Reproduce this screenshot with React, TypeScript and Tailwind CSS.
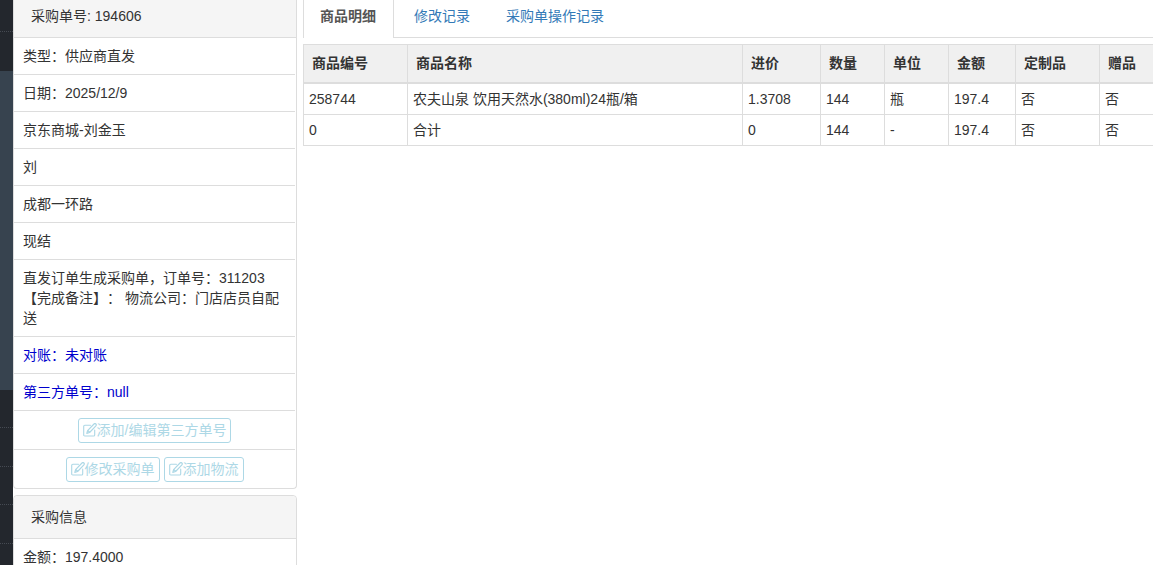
import type { ReactNode } from "react";

function EditIcon() {
  return (
    <svg viewBox="0 0 14 14" className="size-3.5 shrink-0" fill="none" stroke="currentColor" strokeLinejoin="round" strokeLinecap="round" aria-hidden="true">
      <path d="M7.5 2.2H1.8a1.1 1.1 0 0 0-1.1 1.1v8.6A1.1 1.1 0 0 0 1.8 13h8.8a1.1 1.1 0 0 0 1.1-1.1V7" strokeWidth="1.1" />
      <path d="M11 1c.6-.6 1.4-.5 1.9 0s.5 1.2 0 1.8L6.6 9.5 3.8 10.3 4.6 7.6z M4.9 7.6l1.7 1.6" strokeWidth="1.2" />
    </svg>
  );
}

function ActionButton({ children }: { children: ReactNode }) {
  return (
    <button type="button" className="flex h-[25px] items-center rounded-[3px] border border-[#add8e6] bg-white px-1 pb-0.5 text-[#add8e6]">
      <EditIcon />
      <span>{children}</span>
    </button>
  );
}

function Row({ children, blue = false }: { children: ReactNode; blue?: boolean }) {
  return (
    <li className={`mr-px border-b border-[#ddd] px-[9px] py-2 ${blue ? "text-[#0000cd]" : ""}`}>{children}</li>
  );
}

const menu = [
  "h-8 border-b border-dotted border-[#454a52] bg-[#23272d]",
  "h-[39px] bg-[#23272d]",
  "h-[319px] bg-[#37434f]",
  "h-[38px] border-b border-dotted border-[#454a52] bg-[#23272d]",
  "h-[39px] border-b border-dotted border-[#454a52] bg-[#23272d]",
  "h-[38px] border-b border-dotted border-[#454a52] bg-[#23272d]",
  "h-[39px] border-b border-dotted border-[#454a52] bg-[#23272d]",
];

const columns = [
  { title: "商品编号", width: "w-[104px]" },
  { title: "商品名称", width: "" },
  { title: "进价", width: "w-[78px]" },
  { title: "数量", width: "w-16" },
  { title: "单位", width: "w-16" },
  { title: "金额", width: "w-[67px]" },
  { title: "定制品", width: "w-[84px]" },
  { title: "赠品", width: "w-[53px]" },
];

const rows = [
  ["258744", "农夫山泉 饮用天然水(380ml)24瓶/箱", "1.3708", "144", "瓶", "197.4", "否", "否"],
  ["0", "合计", "0", "144", "-", "197.4", "否", "否"],
];

export default function App() {
  return (
    <div
      lang="zh-CN"
      className="flex h-screen overflow-hidden bg-white font-['Liberation_Sans','Noto_Sans_CJK_SC',sans-serif] text-sm leading-5 text-[#333] [text-spacing-trim:space-all]"
    >
      <nav className="w-[13px] shrink-0 bg-[#23272d]">
        {menu.map((style, i) => (
          <div key={i} className={style} />
        ))}
      </nav>

      <aside className="flex w-[284px] shrink-0 flex-col gap-1.5">
        <section className="shrink-0 rounded-b border border-t-0 border-[#ddd]">
          <h2 className="border-b border-[#ddd] bg-[#f5f5f5] px-[17px] pt-1.5 pb-[11px]">采购单号: 194606</h2>
          <ul>
            <Row>类型：供应商直发</Row>
            <Row>日期：2025/12/9</Row>
            <Row>京东商城-刘金玉</Row>
            <Row>刘</Row>
            <Row>成都一环路</Row>
            <Row>现结</Row>
            <Row>直发订单生成采购单，订单号：311203【完成备注】： 物流公司：门店店员自配送</Row>
            <Row blue>对账：未对账</Row>
            <Row blue>第三方单号：null</Row>
          </ul>
          <div className="mr-px flex justify-center border-b border-[#ddd] pt-[7px] pb-1.5">
            <ActionButton>添加/编辑第三方单号</ActionButton>
          </div>
          <div className="mr-px flex justify-center gap-1 pt-[7px] pb-1.5">
            <ActionButton>修改采购单</ActionButton>
            <ActionButton>添加物流</ActionButton>
          </div>
        </section>
        <section className="shrink-0 rounded border border-[#ddd]">
          <h2 className="rounded-t border-b border-[#ddd] bg-[#f5f5f5] px-[17px] py-[11px]">采购信息</h2>
          <ul>
            <Row>金额：197.4000</Row>
          </ul>
        </section>
      </aside>

      <main className="ml-1.5 min-w-0 flex-1">
        <div role="tablist" className="flex">
          <button type="button" role="tab" aria-selected="true" className="border-x border-[#ddd] pt-1.5 pr-[17px] pb-3 pl-4 font-bold text-[#555]">
            商品明细
          </button>
          <div className="flex flex-1 gap-1 border-b border-[#ddd] pl-1 text-[#337ab7]">
            <button type="button" role="tab" aria-selected="false" className="px-4 pt-1.5 pb-[11px]">修改记录</button>
            <button type="button" role="tab" aria-selected="false" className="px-4 pt-1.5 pb-[11px]">采购单操作记录</button>
          </div>
        </div>
        <table className="mt-1.5 w-full table-fixed border-separate border-spacing-0 border-t border-l border-[#ddd] text-left">
          <thead className="bg-[#f0f0f0]">
            <tr>
              {columns.map((c) => (
                <th key={c.title} className={`border-r border-b-2 border-[#ddd] px-2 pt-2 pb-[9px] font-bold last:border-r-0 ${c.width}`}>
                  {c.title}
                </th>
              ))}
            </tr>
          </thead>
          <tbody>
            {rows.map((r) => (
              <tr key={r[0]}>
                {r.map((cell, i) => (
                  <td key={i} className="border-r border-b border-[#ddd] px-[5px] py-[5px] last:border-r-0">
                    {cell}
                  </td>
                ))}
              </tr>
            ))}
          </tbody>
        </table>
      </main>
    </div>
  );
}
